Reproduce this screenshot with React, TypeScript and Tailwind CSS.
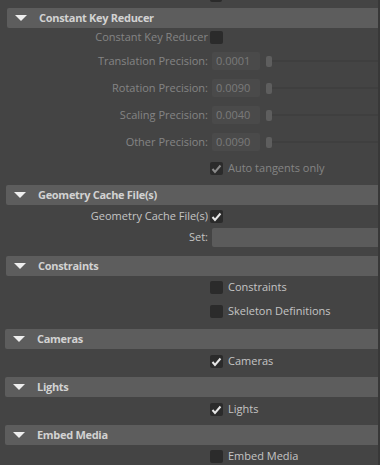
import React from 'react';

const font = { fontFamily: '"Open Sans", "Noto Sans", sans-serif' };

function Header({ title, indent }: { title: string; indent: string }) {
  return (
    <div className={`flex h-[20px] items-center bg-[#5d5d5d] ${indent} rounded-l-[2px]`}>
      <svg width="12" height="7" viewBox="0 0 12 7" className="ml-[8px] shrink-0">
        <polygon points="0,0 12,0 6,6" fill="#eeeeee" />
      </svg>
      <span className="ml-[12px] text-[11px] font-bold tracking-[-0.3px] text-[#d2d2d2]">{title}</span>
    </div>
  );
}

function Box({ checked, disabled }: { checked?: boolean; disabled?: boolean }) {
  return (
    <div className="flex h-[13px] w-[13px] shrink-0 items-center justify-center rounded-[2px] bg-[#2b2b2b]">
      {checked && (
        <svg width="11" height="10" viewBox="0 0 11 10">
          <polyline
            points="1.5,5 4,8 9.5,1.5"
            fill="none"
            stroke={disabled ? '#8a8a8a' : '#e6e6e6'}
            strokeWidth="2"
          />
        </svg>
      )}
    </div>
  );
}

function LabelBox({ label, checked, disabled, mt }: { label: string; checked?: boolean; disabled?: boolean; mt: string }) {
  return (
    <div className={`flex h-[13px] items-center ${mt}`}>
      <span className={`w-[208px] text-right text-[11px] ${disabled ? 'text-[#848484]' : 'text-[#c4c4c4]'}`}>{label}</span>
      <div className="ml-[2px]">
        <Box checked={checked} disabled={disabled} />
      </div>
    </div>
  );
}

function SideBox({ label, checked, disabled, mt }: { label: string; checked?: boolean; disabled?: boolean; mt: string }) {
  return (
    <div className={`flex h-[13px] items-center pl-[210px] ${mt}`}>
      <Box checked={checked} disabled={disabled} />
      <span className={`ml-[5px] text-[11px] ${disabled ? 'text-[#848484]' : 'text-[#c4c4c4]'}`}>{label}</span>
    </div>
  );
}

function Precision({ label, value, mt }: { label: string; value: string; mt: string }) {
  return (
    <div className={`flex h-[18px] items-center ${mt}`}>
      <span className="w-[208px] text-right text-[11px] text-[#848484]">{label}</span>
      <div className="ml-[4px] flex h-[18px] w-[48px] items-center rounded-[2px] bg-[#4a4a4a] pl-[4px] text-[11px] text-[#7a7a7a]">
        {value}
      </div>
      <div className="ml-[6px] flex flex-1 items-center">
        <div className="h-[11px] w-[6px] rounded-[2px] bg-[#5e5e5e]" />
        <div className="h-[2px] flex-1 bg-[#3f3f3f]" />
      </div>
    </div>
  );
}

export default function App() {
  return (
    <div className="flex h-[465px] w-[380px] overflow-hidden bg-[#444444]" style={font}>
      <div className="flex w-[378px] flex-col">
        <div className="ml-[210px] h-[2px] w-[12px] rounded-b-[2px] bg-[#2b2b2b]" />

        <div className="mt-[6px]">
          <Header title="Constant Key Reducer" indent="ml-[7px]" />
        </div>
        <LabelBox label="Constant Key Reducer" disabled mt="mt-[3px]" />
        <Precision label="Translation Precision:" value="0.0001" mt="mt-[8px]" />
        <Precision label="Rotation Precision:" value="0.0090" mt="mt-[9px]" />
        <Precision label="Scaling Precision:" value="0.0040" mt="mt-[9px]" />
        <Precision label="Other Precision:" value="0.0090" mt="mt-[9px]" />
        <SideBox label="Auto tangents only" checked disabled mt="mt-[11px]" />

        <div className="mt-[10px]">
          <Header title="Geometry Cache File(s)" indent="ml-[6px]" />
        </div>
        <LabelBox label="Geometry Cache File(s)" checked mt="mt-[5px]" />
        <div className="mt-[5px] flex h-[19px] items-center">
          <span className="w-[208px] text-right text-[11px] text-[#c4c4c4]">Set:</span>
          <div className="ml-[4px] h-[19px] flex-1 rounded-l-[2px] bg-[#5b5b5b]" />
        </div>

        <div className="mt-[9px]">
          <Header title="Constraints" indent="ml-[6px]" />
        </div>
        <SideBox label="Constraints" mt="mt-[5px]" />
        <SideBox label="Skeleton Definitions" mt="mt-[11px]" />

        <div className="mt-[11px]">
          <Header title="Cameras" indent="ml-[5px]" />
        </div>
        <SideBox label="Cameras" checked mt="mt-[6px]" />

        <div className="mt-[9px]">
          <Header title="Lights" indent="ml-[5px]" />
        </div>
        <SideBox label="Lights" checked mt="mt-[6px]" />

        <div className="mt-[9px]">
          <Header title="Embed Media" indent="ml-[5px]" />
        </div>
        <SideBox label="Embed Media" mt="mt-[5px]" />
      </div>
      <div className="w-[2px] bg-[#383838]" />
    </div>
  );
}
